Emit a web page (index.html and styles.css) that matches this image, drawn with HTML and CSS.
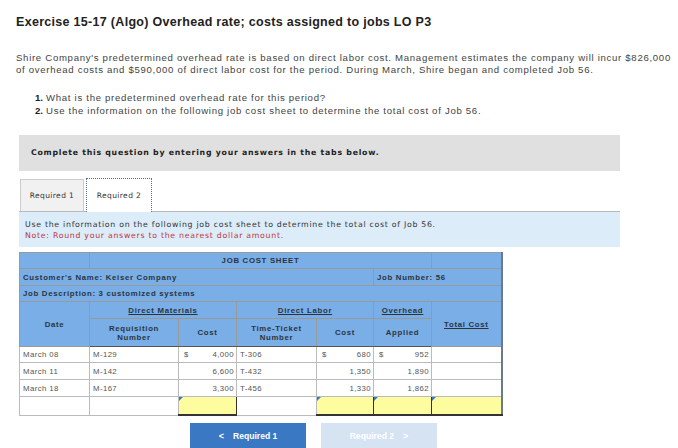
FILE: index.html
```html
<!DOCTYPE html>
<html>
<head>
<meta charset="utf-8">
<link rel="stylesheet" href="styles.css">
</head>
<body>
<div class="page">
  <h1 class="title">Exercise 15-17 (Algo) Overhead rate; costs assigned to jobs LO P3</h1>
  <p class="intro">Shire Company's predetermined overhead rate is based on direct labor cost. Management estimates the company will incur $826,000<br>of overhead costs and $590,000 of direct labor cost for the period. During March, Shire began and completed Job 56.</p>
  <ol class="questions">
    <li><span class="num">1.</span>What is the predetermined overhead rate for this period?</li>
    <li><span class="num">2.</span>Use the information on the following job cost sheet to determine the total cost of Job 56.</li>
  </ol>
  <div class="instruct">Complete this question by entering your answers in the tabs below.</div>
  <div class="tabs">
    <div class="tab">Required 1</div>
    <div class="tab active">Required 2</div>
  </div>
  <div class="panel">
    <div>Use the information on the following job cost sheet to determine the total cost of Job 56.</div>
    <div class="note">Note: Round your answers to the nearest dollar amount.</div>
  </div>
  <table class="sheet">
    <colgroup>
      <col class="c1"><col class="c2"><col class="c3"><col class="c4"><col class="c5"><col class="c6"><col class="c7">
    </colgroup>
    <tr class="h r16">
      <td></td>
      <td colspan="5" class="center">JOB COST SHEET</td>
      <td></td>
    </tr>
    <tr class="h r17">
      <td colspan="5">Customer's Name: Keiser Company</td>
      <td colspan="2">Job Number: 56</td>
    </tr>
    <tr class="h r16">
      <td colspan="7">Job Description: 3 customized systems</td>
    </tr>
    <tr class="h r17">
      <td rowspan="2" class="center">Date</td>
      <td colspan="2" class="center"><u>Direct Materials</u></td>
      <td colspan="2" class="center"><u>Direct Labor</u></td>
      <td class="center"><u>Overhead</u></td>
      <td rowspan="2" class="center"><u>Total Cost</u></td>
    </tr>
    <tr class="h r29 lasthead">
      <td class="center">Requisition<br>Number</td>
      <td class="center">Cost</td>
      <td class="center">Time-Ticket<br>Number</td>
      <td class="center">Cost</td>
      <td class="center">Applied</td>
    </tr>
    <tr class="d first">
      <td>March 08</td><td>M-129</td>
      <td class="money"><span>$</span><span>4,000</span></td>
      <td>T-306</td>
      <td class="money"><span>$</span><span>680</span></td>
      <td class="money"><span>$</span><span>952</span></td>
      <td></td>
    </tr>
    <tr class="d">
      <td>March 11</td><td>M-142</td>
      <td class="money"><span></span><span>6,600</span></td>
      <td>T-432</td>
      <td class="money"><span></span><span>1,350</span></td>
      <td class="money"><span></span><span>1,890</span></td>
      <td></td>
    </tr>
    <tr class="d">
      <td>March 18</td><td>M-167</td>
      <td class="money"><span></span><span>3,300</span></td>
      <td>T-456</td>
      <td class="money"><span></span><span>1,330</span></td>
      <td class="money"><span></span><span>1,862</span></td>
      <td></td>
    </tr>
    <tr class="d input">
      <td></td><td></td>
      <td class="inp"></td>
      <td></td>
      <td class="inp"></td>
      <td class="inp"></td>
      <td class="inp"></td>
    </tr>
  </table>
  <div class="nav">
    <div class="btn prev"><span class="chev">&lt;</span> Required 1</div>
    <div class="btn next">Required 2 <span class="chev">&gt;</span></div>
  </div>
</div>
</body>
</html>
```

FILE: styles.css
```css
html, body {
  margin: 0;
  padding: 0;
  background: #fff;
}
.page {
  padding: 14px 0 0 16px;
  font-family: "Liberation Sans", Arial, sans-serif;
  color: #333;
}
.title {
  margin: 0;
  font-size: 12.5px;
  font-weight: bold;
  color: #222;
  line-height: 16px;
  letter-spacing: 0.3px;
}
.intro {
  margin: 22px 0 0 0;
  font-size: 9.6px;
  line-height: 12px;
  color: #444;
  letter-spacing: 0.7px;
  white-space: nowrap;
}
.questions {
  list-style: none;
  margin: 15px 0 0 0;
  padding: 0 0 0 19px;
  font-size: 9.6px;
  line-height: 13px;
  color: #444;
  letter-spacing: 0.7px;
}
.questions .num {
  font-weight: bold;
  color: #222;
  margin-right: 3px;
  letter-spacing: 0;
}
.instruct {
  margin: 18px 0 0 3px;
  width: 589px;
  height: 36px;
  padding-left: 12px;
  box-sizing: content-box;
  background: #e0e0e0;
  font-family: "DejaVu Sans", Verdana, sans-serif;
  font-weight: bold;
  font-size: 7.8px;
  line-height: 36px;
  letter-spacing: 0.75px;
  color: #222;
}
.tabs {
  display: flex;
  gap: 2px;
  margin: 7px 0 0 4px;
  height: 33px;
  align-items: flex-end;
}
.tab {
  width: 64px;
  height: 32px;
  box-sizing: border-box;
  border: 1px solid #ccc;
  border-bottom: none;
  background: #f1f1f1;
  font-family: "DejaVu Sans", Verdana, sans-serif;
  font-size: 7.5px;
  letter-spacing: 0.4px;
  color: #333;
  display: flex;
  align-items: center;
  justify-content: center;
}
.tab.active {
  height: 34px;
  width: 66px;
  background: #fff;
  border: 1px dotted #5b6f8f;
  border-bottom: none;
  position: relative;
  z-index: 1;
  margin-bottom: -1px;
}
.panel {
  margin-left: 3px;
  width: 601px;
  height: 36px;
  box-sizing: border-box;
  border-top: 1px solid #b9b9b9;
  background: #dcecf9;
  padding: 7px 0 0 6px;
  font-family: "DejaVu Sans", Verdana, sans-serif;
  font-size: 7.8px;
  line-height: 11px;
  letter-spacing: 0.72px;
  color: #333;
}
.panel .note {
  color: #c0343b;
}
.sheet {
  margin: 5px 0 0 3px;
  width: 482px;
  table-layout: fixed;
  border-collapse: collapse;
  font-family: "Liberation Sans", Arial, sans-serif;
  font-size: 7.8px;
  border-right: 2px solid #6a7a8c;
}
.c1 { width: 70px; }
.c2 { width: 89px; }
.c3 { width: 58px; }
.c4 { width: 80px; }
.c5 { width: 57px; }
.c6 { width: 58px; }
.c7 { width: 70px; }
.sheet td {
  border: 1px solid #999;
  padding: 0 3px;
  white-space: nowrap;
  overflow: hidden;
}
.sheet tr.h td {
  background: #7aaee6;
  font-weight: bold;
  color: #2a3440;
  letter-spacing: 0.7px;
}
.sheet .center { text-align: center; }
.r16 td { height: 15px; }
.r17 td { height: 16px; }
.r29 td { height: 27px; line-height: 9px; }
.sheet tr.lasthead td { border-bottom: 1px solid #555; }
.sheet tr.d td {
  height: 16px;
  color: #555;
  background: #fff;
  border-color: #bbb;
  letter-spacing: 0.4px;
}
.sheet tr.d.first td { height: 15px; }
.sheet tr.d.input td { height: 17px; }
.sheet td.money {
  padding: 0 2px 0 5px;
}
.money {
  text-align: right;
}
.money span:first-child {
  float: left;
}
.sheet tr.d td.inp {
  background: #fdfd9f;
  border: 1px solid #333;
  border-bottom: 2px solid #333;
  position: relative;
}
.inp::before {
  content: "";
  position: absolute;
  left: 0;
  top: 0;
  border-top: 4px solid #3a78c3;
  border-right: 4px solid transparent;
}
.nav {
  display: flex;
  gap: 15px;
  margin: 7px 0 0 174px;
}
.btn {
  width: 116px;
  height: 26px;
  display: flex;
  align-items: center;
  justify-content: center;
  gap: 9px;
  font-family: "Liberation Sans", Arial, sans-serif;
  font-weight: bold;
  font-size: 8.6px;
  color: #fff;
}
.btn.prev {
  background: #3a78c3;
}
.btn.next {
  background: #d6e3f3;
}
.chev {
  font-size: 9px;
}
```
